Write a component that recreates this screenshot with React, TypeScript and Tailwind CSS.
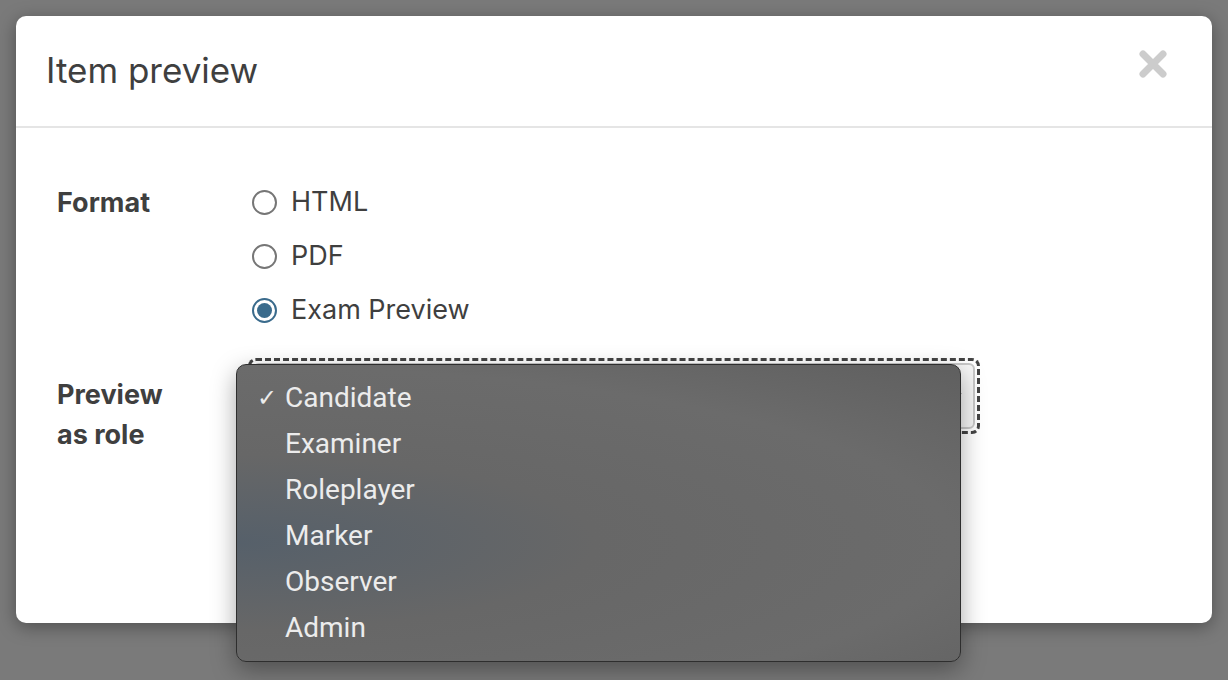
import React from "react";

const ROLES = ["Candidate", "Examiner", "Roleplayer", "Marker", "Observer", "Admin"];
const FORMATS = ["HTML", "PDF", "Exam Preview"];

function Radio({ checked }: { checked: boolean }) {
  return (
    <span
      className={`flex h-[25px] w-[25px] shrink-0 items-center justify-center rounded-full border-2 bg-white ${
        checked ? "border-[#3a6b8c]" : "border-[#767676]"
      }`}
    >
      {checked ? <span className="h-[15px] w-[15px] rounded-full bg-[#3a6b8c]" /> : null}
    </span>
  );
}

export default function App() {
  const [format, setFormat] = React.useState("Exam Preview");

  return (
    <div
      className="flex h-[680px] w-full justify-center overflow-hidden bg-[#7a7a7a] pt-4"
      style={{ fontFamily: "Inter, 'Open Sans', sans-serif" }}
    >
      <div className="relative h-[607px] w-[1196px] rounded-[10px] bg-white shadow-[0_4px_18px_rgba(0,0,0,0.35)]">
        {/* header */}
        <div className="flex h-[112px] items-center justify-between border-b-2 border-[#e5e5e5] pl-[30px] pr-[44px]">
          <h1 className="pb-[2px] text-[35px] font-normal text-[#3f3f3f]">Item preview</h1>
          <svg width="30" height="30" viewBox="0 0 30 30" className="-mt-[14px]">
            <path d="M5 5 L25 25 M25 5 L5 25" stroke="#cccccc" strokeWidth="7" strokeLinecap="round" />
          </svg>
        </div>

        {/* body */}
        <div className="flex flex-col pl-[41px] pt-[59px]">
          <div className="flex">
            <div className="-mt-[4px] w-[195px] text-[27px] font-bold text-[#3f3f3f]">Format</div>
            <div className="flex flex-col gap-[25px]">
              {FORMATS.map((f) => (
                <label
                  key={f}
                  onClick={() => setFormat(f)}
                  className="flex h-[29px] cursor-pointer items-center gap-[14px] pt-[2px] text-[27px] text-[#3f3f3f]"
                >
                  <Radio checked={format === f} />
                  {f}
                </label>
              ))}
            </div>
          </div>

          <div className="mt-[34px] flex">
            <div className="w-[191px] pt-[17px] text-[27px] font-bold leading-[40px] text-[#3f3f3f]">
              Preview
              <br />
              as role
            </div>
            <div className="relative h-[76px] w-[732px] rounded-[8px] border-[3px] border-dashed border-[#444]">
              <div className="absolute inset-[2px] flex items-center justify-end rounded-[6px] border-2 border-[#c8c8c8] bg-[#f6f6f6] pr-[10px]">
                <svg width="14" height="14" viewBox="0 0 14 14">
                  <path d="M2 4 L7 10 L12 4" stroke="#555" strokeWidth="1.5" fill="none" />
                </svg>
              </div>
            </div>
          </div>
        </div>

        {/* native select dropdown */}
        <div
          className="absolute left-[220px] top-[348px] w-[725px] rounded-[10px] border border-[#2e2e2e] bg-[radial-gradient(ellipse_at_0%_60%,#56606a_0%,#676767_35%,#6b6b6b_70%,#5f5f5f_100%)] py-[10px] shadow-[0_8px_24px_rgba(0,0,0,0.35)]"
          style={{ fontFamily: "Roboto, 'Noto Sans', sans-serif" }}
        >
          {ROLES.map((r, i) => (
            <div key={r} className="flex h-[46px] items-center text-[28px] text-[#ececec]">
              <span className="w-[48px] pl-[20px] text-[24px]">{i === 0 ? "✓" : ""}</span>
              {r}
            </div>
          ))}
        </div>
      </div>
    </div>
  );
}
